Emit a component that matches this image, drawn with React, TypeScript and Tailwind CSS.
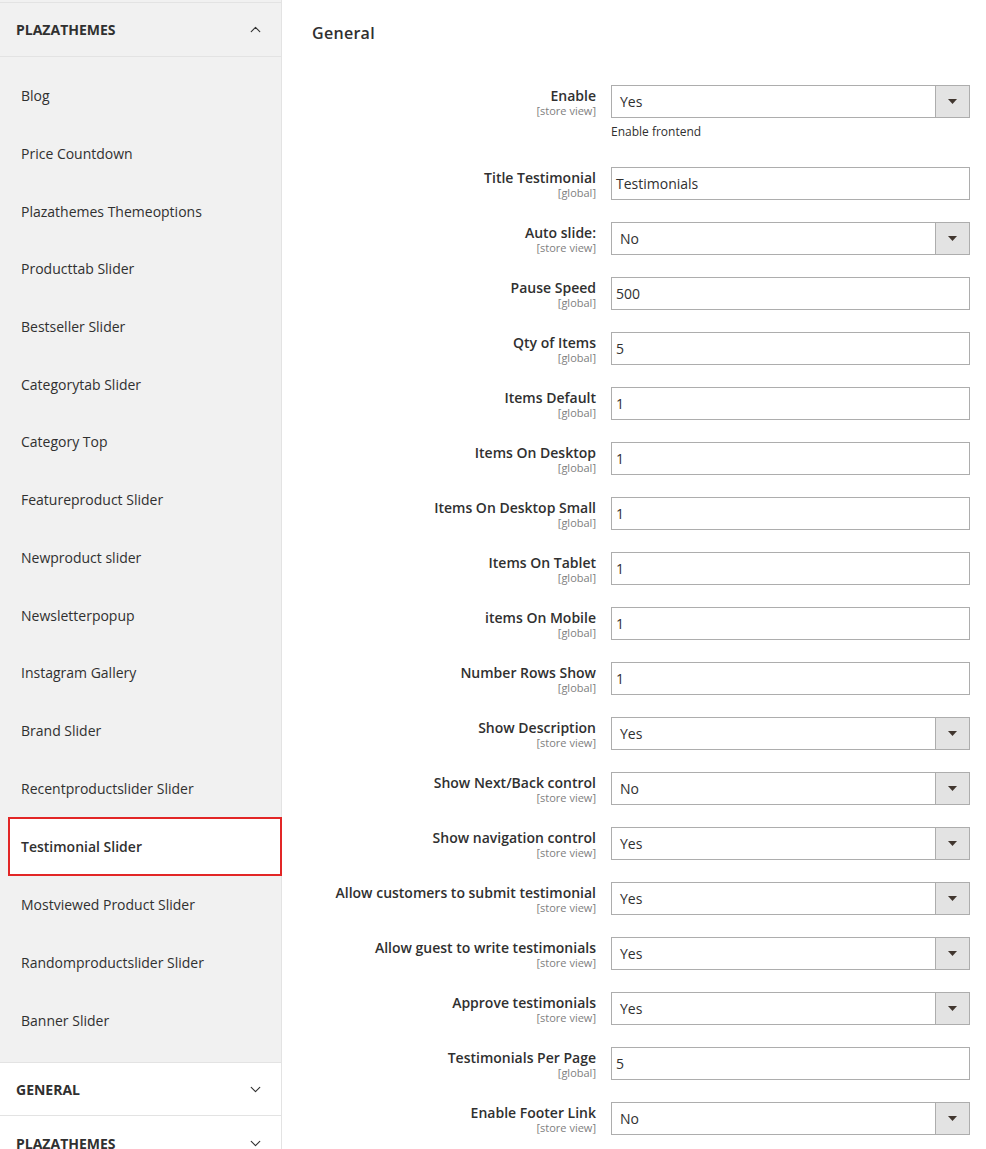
import { ChevronDown, ChevronUp } from "lucide-react";

const items = [
  "Blog",
  "Price Countdown",
  "Plazathemes Themeoptions",
  "Producttab Slider",
  "Bestseller Slider",
  "Categorytab Slider",
  "Category Top",
  "Featureproduct Slider",
  "Newproduct slider",
  "Newsletterpopup",
  "Instagram Gallery",
  "Brand Slider",
  "Recentproductslider Slider",
  "Testimonial Slider",
  "Mostviewed Product Slider",
  "Randomproductslider Slider",
  "Banner Slider",
];

type Field = {
  label: string;
  scope: string;
  value: string;
  select?: boolean;
  note?: string;
};

const fields: Field[] = [
  { label: "Enable", scope: "store view", value: "Yes", select: true, note: "Enable frontend" },
  { label: "Title Testimonial", scope: "global", value: "Testimonials" },
  { label: "Auto slide:", scope: "store view", value: "No", select: true },
  { label: "Pause Speed", scope: "global", value: "500" },
  { label: "Qty of Items", scope: "global", value: "5" },
  { label: "Items Default", scope: "global", value: "1" },
  { label: "Items On Desktop", scope: "global", value: "1" },
  { label: "Items On Desktop Small", scope: "global", value: "1" },
  { label: "Items On Tablet", scope: "global", value: "1" },
  { label: "items On Mobile", scope: "global", value: "1" },
  { label: "Number Rows Show", scope: "global", value: "1" },
  { label: "Show Description", scope: "store view", value: "Yes", select: true },
  { label: "Show Next/Back control", scope: "store view", value: "No", select: true },
  { label: "Show navigation control", scope: "store view", value: "Yes", select: true },
  { label: "Allow customers to submit testimonial", scope: "store view", value: "Yes", select: true },
  { label: "Allow guest to write testimonials", scope: "store view", value: "Yes", select: true },
  { label: "Approve testimonials", scope: "store view", value: "Yes", select: true },
  { label: "Testimonials Per Page", scope: "global", value: "5" },
  { label: "Enable Footer Link", scope: "store view", value: "No", select: true },
];

function FieldRow({ field }: { field: Field }) {
  return (
    <div className="flex items-start gap-[15px] mb-[22px]">
      <div className="w-[284px] shrink-0 text-right pt-[1px]">
        <div className="text-[14px] font-semibold leading-[19px] text-[#303030]">{field.label}</div>
        <div className="text-[11px] leading-[11px] text-[#808080]">[{field.scope}]</div>
      </div>
      <div className="flex-1">
        <div className="flex h-[33px] border border-[#adadad] bg-white">
          <div
            className={
              field.select
                ? "flex flex-1 items-center pl-[8px] text-[14px] text-[#303030]"
                : "flex flex-1 items-center pl-[4px] text-[14px] text-[#303030]"
            }
          >
            {field.value}
          </div>
          {field.select && (
            <div className="flex w-[34px] items-center justify-center border-l border-[#adadad] bg-[#e3e3e3]">
              <svg width="9" height="5" viewBox="0 0 9 5">
                <path d="M0 0h9L4.5 5z" fill="#41362f" />
              </svg>
            </div>
          )}
        </div>
        {field.note && (
          <div className="mt-[5px] mb-[4px] text-[12px] leading-[18px] text-[#303030]">{field.note}</div>
        )}
      </div>
    </div>
  );
}

export default function App() {
  return (
    <div
      className="flex h-[1149px] overflow-hidden bg-white"
      style={{ fontFamily: '"Open Sans", sans-serif' }}
    >
      <aside className="w-[282px] shrink-0 border-r border-[#e3e3e3] bg-[#f1f1f1] pt-[2px] text-[#303030]">
        <div className="flex h-[55px] items-center justify-between border-t border-b border-[#e3e3e3] pl-[16px] pr-[17px]">
          <span className="text-[14px] font-bold">PLAZATHEMES</span>
          <ChevronUp className="h-[17px] w-[17px]" strokeWidth={1.6} />
        </div>
        <ul className="pt-[10px] pb-[13px]">
          {items.map((item) =>
            item === "Testimonial Slider" ? (
              <li
                key={item}
                className="ml-[8px] mr-[-1px] flex h-[59px] items-center border-2 border-[#e22626] bg-white pl-[11px] text-[14px] font-semibold"
              >
                {item}
              </li>
            ) : (
              <li key={item} className="ml-[8px] flex h-[57.7px] items-center pl-[13px] text-[14px]">
                {item}
              </li>
            )
          )}
        </ul>
        <div className="flex h-[54px] items-center justify-between border-t border-b border-[#e3e3e3] bg-white pl-[16px] pr-[17px]">
          <span className="text-[14px] font-bold">GENERAL</span>
          <ChevronDown className="h-[17px] w-[17px]" strokeWidth={1.6} />
        </div>
        <div className="flex h-[54px] items-center justify-between bg-white pl-[16px] pr-[17px]">
          <span className="text-[14px] font-bold">PLAZATHEMES</span>
          <ChevronDown className="h-[17px] w-[17px]" strokeWidth={1.6} />
        </div>
      </aside>
      <main className="flex-1 pl-[30px] pr-[16px] pt-[20px]">
        <h2 className="text-[16px] font-semibold leading-[26px] text-[#303030] tracking-[0.3px]">General</h2>
        <div className="mt-[39px]">
          {fields.map((f) => (
            <FieldRow key={f.label} field={f} />
          ))}
        </div>
      </main>
    </div>
  );
}
